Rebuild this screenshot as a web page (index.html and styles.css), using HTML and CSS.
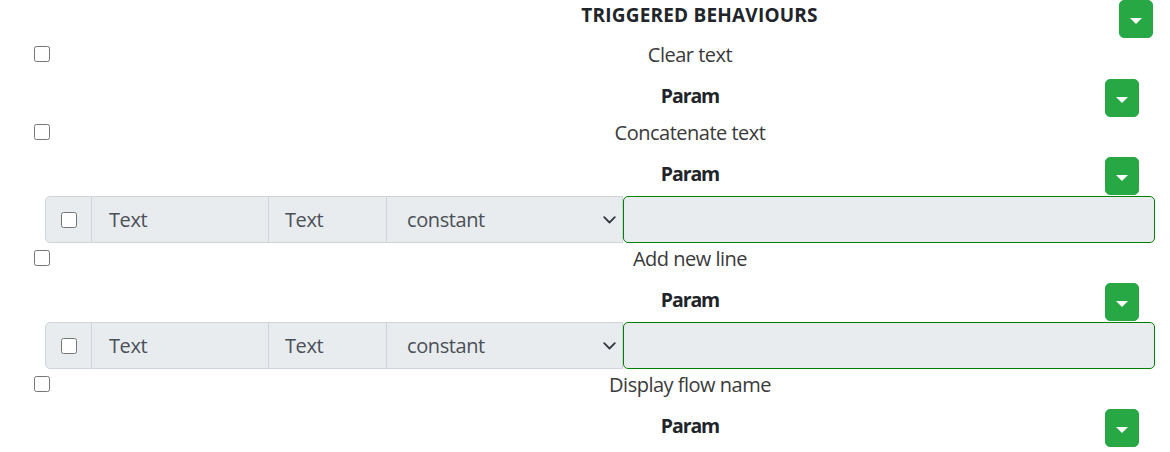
FILE: index.html
```html
<!DOCTYPE html>
<html lang="en">
<head>
<meta charset="utf-8">
<title>Triggered behaviours</title>
<link rel="stylesheet" href="styles.css">
</head>
<body>
<div class="page">
  <div class="head-row">
    <h6 class="head-title">TRIGGERED BEHAVIOURS</h6>
    <button class="btn-caret" type="button"><span class="caret"></span></button>
  </div>

  <div class="beh-row"><input type="checkbox" class="chk"><span class="beh-label">Clear text</span></div>
  <div class="param-row"><span class="param-label">Param</span><button class="btn-caret" type="button"><span class="caret"></span></button></div>

  <div class="beh-row"><input type="checkbox" class="chk"><span class="beh-label">Concatenate text</span></div>
  <div class="param-row"><span class="param-label">Param</span><button class="btn-caret" type="button"><span class="caret"></span></button></div>
  <div class="param-group">
    <div class="cell cell-check"><input type="checkbox" class="chk chk-inner"></div>
    <div class="cell cell-text1">Text</div>
    <div class="cell cell-text2">Text</div>
    <div class="cell cell-select"><span>constant</span><svg class="chev" width="13" height="8" viewBox="0 0 13 8"><path d="M1.2 1.2 L6.5 6.5 L11.8 1.2" fill="none" stroke="#343a40" stroke-width="1.8" stroke-linecap="round" stroke-linejoin="round"/></svg></div>
    <div class="cell cell-input"></div>
  </div>

  <div class="beh-row"><input type="checkbox" class="chk"><span class="beh-label">Add new line</span></div>
  <div class="param-row"><span class="param-label">Param</span><button class="btn-caret" type="button"><span class="caret"></span></button></div>
  <div class="param-group">
    <div class="cell cell-check"><input type="checkbox" class="chk chk-inner"></div>
    <div class="cell cell-text1">Text</div>
    <div class="cell cell-text2">Text</div>
    <div class="cell cell-select"><span>constant</span><svg class="chev" width="13" height="8" viewBox="0 0 13 8"><path d="M1.2 1.2 L6.5 6.5 L11.8 1.2" fill="none" stroke="#343a40" stroke-width="1.8" stroke-linecap="round" stroke-linejoin="round"/></svg></div>
    <div class="cell cell-input"></div>
  </div>

  <div class="beh-row"><input type="checkbox" class="chk"><span class="beh-label">Display flow name</span></div>
  <div class="param-row"><span class="param-label">Param</span><button class="btn-caret" type="button"><span class="caret"></span></button></div>
</div>
</body>
</html>
```

FILE: styles.css
```css
* { box-sizing: border-box; }
html, body { margin: 0; padding: 0; background: #fff; }
body {
  font-family: "Open Sans", "Noto Sans", sans-serif;
  color: #212529;
  font-size: 20px;
}
.page { width: 1170px; }

.head-row {
  display: flex;
  align-items: flex-start;
  height: 39px;
  padding: 0 17px 0 280px;
}
.head-title {
  flex: 1;
  margin: 1px 0 0;
  text-align: center;
  font-size: 19px;
  line-height: 28px;
  font-weight: 700;
  letter-spacing: 0.2px;
  color: #212529;
}

.btn-caret {
  flex: none;
  width: 34px;
  height: 38px;
  padding: 0;
  margin: 0;
  background: #28a745;
  border: 1px solid #28a745;
  border-radius: 5px;
  display: flex;
  align-items: center;
  justify-content: center;
  cursor: pointer;
}
.caret {
  width: 0;
  height: 0;
  margin-top: 4px;
  border-top: 6px solid #fff;
  border-left: 6px solid transparent;
  border-right: 6px solid transparent;
}

.chk {
  flex: none;
  width: 16px;
  height: 16px;
  margin: 7px 0 0;
}

.beh-row {
  display: flex;
  align-items: flex-start;
  height: 40px;
  padding-left: 34px;
}
.beh-label {
  flex: 1;
  text-align: center;
  padding-left: 160px;
  margin-top: 1px;
  line-height: 30px;
  color: #3a3a3a;
  letter-spacing: -0.5px;
}

.param-row {
  display: flex;
  align-items: flex-start;
  height: 38px;
  padding: 0 31px 0 275px;
}
.param-label {
  flex: 1;
  margin-top: 2px;
  text-align: center;
  font-size: 19.5px;
  font-weight: 700;
  line-height: 30px;
  letter-spacing: -1.1px;
  color: #212529;
}

.param-group {
  display: flex;
  height: 47px;
  margin: 1px 15px 0 45px;
}
.cell {
  display: flex;
  align-items: center;
  height: 100%;
  background: #e9ecef;
  border: 1px solid #ced4da;
  border-left: none;
  color: #495057;
  letter-spacing: -0.4px;
}
.cell-check {
  width: 47px;
  justify-content: center;
  border-left: 1px solid #ced4da;
  border-radius: 5px 0 0 5px;
}
.chk-inner { margin: 0; }
.cell-text1 { width: 177px; padding-left: 17px; }
.cell-text2 { width: 118px; padding-left: 16px; }
.cell-select {
  width: 236px;
  padding: 0 6px 0 20px;
  justify-content: space-between;
}
.chev { display: block; }
.cell-input {
  flex: 1;
  border: 1px solid #008000;
  border-radius: 5px;
}
```
